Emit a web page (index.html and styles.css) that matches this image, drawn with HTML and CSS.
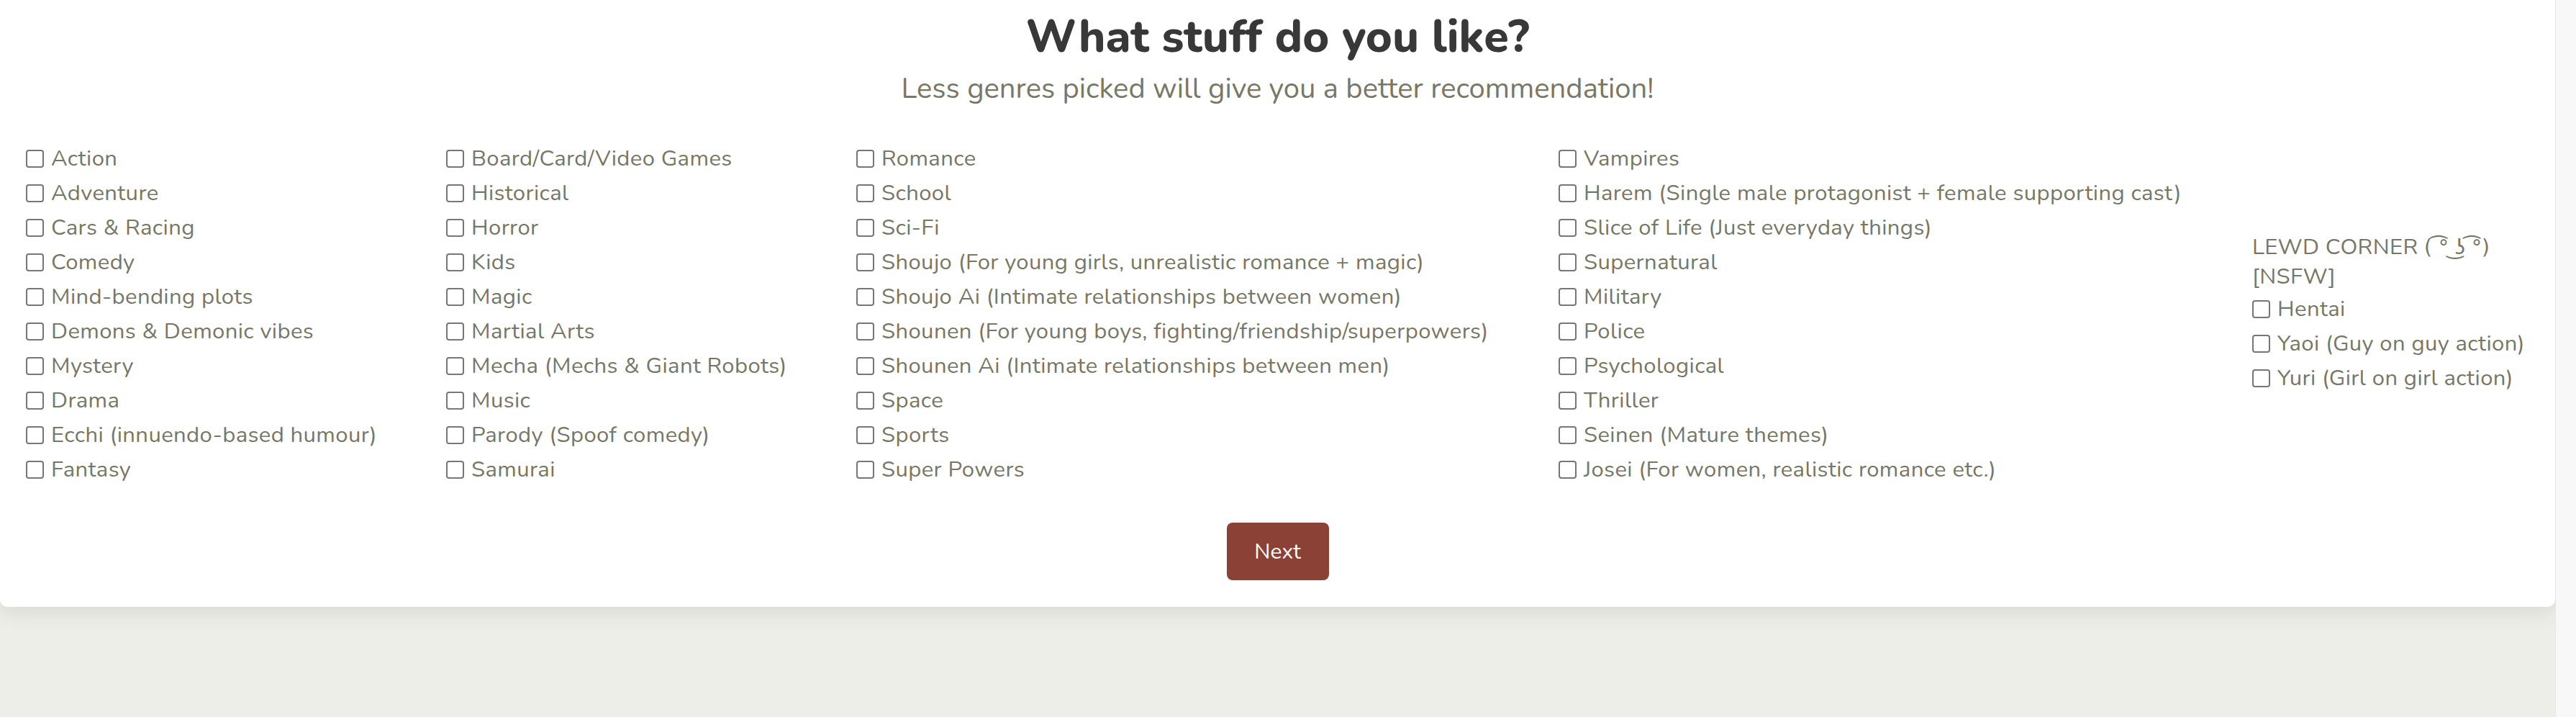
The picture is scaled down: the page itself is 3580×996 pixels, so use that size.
FILE: index.html
```html
<!DOCTYPE html>
<html lang="en">
<head>
<meta charset="utf-8">
<title>What stuff do you like?</title>
<link rel="stylesheet" href="styles.css">
</head>
<body>
<div class="page">
  <main class="card">
    <h1 class="title">What stuff do you like?</h1>
    <p class="subtitle">Less genres picked will give you a better recommendation!</p>
    <form class="genres">
      <div class="col">
        <label class="opt"><input type="checkbox"><span>Action</span></label>
        <label class="opt"><input type="checkbox"><span>Adventure</span></label>
        <label class="opt"><input type="checkbox"><span>Cars &amp; Racing</span></label>
        <label class="opt"><input type="checkbox"><span>Comedy</span></label>
        <label class="opt"><input type="checkbox"><span>Mind-bending plots</span></label>
        <label class="opt"><input type="checkbox"><span>Demons &amp; Demonic vibes</span></label>
        <label class="opt"><input type="checkbox"><span>Mystery</span></label>
        <label class="opt"><input type="checkbox"><span>Drama</span></label>
        <label class="opt"><input type="checkbox"><span>Ecchi (innuendo-based humour)</span></label>
        <label class="opt"><input type="checkbox"><span>Fantasy</span></label>
      </div>
      <div class="col">
        <label class="opt"><input type="checkbox"><span>Board/Card/Video Games</span></label>
        <label class="opt"><input type="checkbox"><span>Historical</span></label>
        <label class="opt"><input type="checkbox"><span>Horror</span></label>
        <label class="opt"><input type="checkbox"><span>Kids</span></label>
        <label class="opt"><input type="checkbox"><span>Magic</span></label>
        <label class="opt"><input type="checkbox"><span>Martial Arts</span></label>
        <label class="opt"><input type="checkbox"><span>Mecha (Mechs &amp; Giant Robots)</span></label>
        <label class="opt"><input type="checkbox"><span>Music</span></label>
        <label class="opt"><input type="checkbox"><span>Parody (Spoof comedy)</span></label>
        <label class="opt"><input type="checkbox"><span>Samurai</span></label>
      </div>
      <div class="col">
        <label class="opt"><input type="checkbox"><span>Romance</span></label>
        <label class="opt"><input type="checkbox"><span>School</span></label>
        <label class="opt"><input type="checkbox"><span>Sci-Fi</span></label>
        <label class="opt"><input type="checkbox"><span>Shoujo (For young girls, unrealistic romance + magic)</span></label>
        <label class="opt"><input type="checkbox"><span>Shoujo Ai (Intimate relationships between women)</span></label>
        <label class="opt"><input type="checkbox"><span>Shounen (For young boys, fighting/friendship/superpowers)</span></label>
        <label class="opt"><input type="checkbox"><span>Shounen Ai (Intimate relationships between men)</span></label>
        <label class="opt"><input type="checkbox"><span>Space</span></label>
        <label class="opt"><input type="checkbox"><span>Sports</span></label>
        <label class="opt"><input type="checkbox"><span>Super Powers</span></label>
      </div>
      <div class="col">
        <label class="opt"><input type="checkbox"><span>Vampires</span></label>
        <label class="opt"><input type="checkbox"><span>Harem (Single male protagonist + female supporting cast)</span></label>
        <label class="opt"><input type="checkbox"><span>Slice of Life (Just everyday things)</span></label>
        <label class="opt"><input type="checkbox"><span>Supernatural</span></label>
        <label class="opt"><input type="checkbox"><span>Military</span></label>
        <label class="opt"><input type="checkbox"><span>Police</span></label>
        <label class="opt"><input type="checkbox"><span>Psychological</span></label>
        <label class="opt"><input type="checkbox"><span>Thriller</span></label>
        <label class="opt"><input type="checkbox"><span>Seinen (Mature themes)</span></label>
        <label class="opt"><input type="checkbox"><span>Josei (For women, realistic romance etc.)</span></label>
      </div>
      <div class="col lewd">
        <div class="lewd-title">LEWD CORNER <span class="face">( ͡° ͜ʖ ͡°)</span><br>[NSFW]</div>
        <label class="opt"><input type="checkbox"><span>Hentai</span></label>
        <label class="opt"><input type="checkbox"><span>Yaoi (Guy on guy action)</span></label>
        <label class="opt"><input type="checkbox"><span>Yuri (Girl on girl action)</span></label>
      </div>
    </form>
    <div class="actions">
      <button type="button" class="next">Next</button>
    </div>
  </main>
</div>
<div class="scrollbar"></div>
</body>
</html>
```

FILE: styles.css
```css
html, body {
  margin: 0;
  padding: 0;
  height: 100%;
}

body {
  display: flex;
  background: #eeeee9;
  font-family: "Nunito", "Lato", "Noto Sans", sans-serif;
  overflow: hidden;
}

.page {
  flex: 1;
  min-width: 0;
}

.scrollbar {
  width: 28px;
  flex: none;
  background: #f8f8f8;
  border-left: 1px solid #e6e6e6;
}

.card {
  background: #ffffff;
  border-radius: 0 0 10px 10px;
  box-shadow: 0 6px 28px rgba(60, 60, 40, 0.13);
  padding: 15px 0 37px;
  text-align: center;
}

.title {
  margin: 0;
  font-size: 63px;
  line-height: 73px;
  font-weight: 800;
  color: #383838;
}

.subtitle {
  margin: 11px 0 0;
  font-size: 40px;
  line-height: 48px;
  color: #787866;
}

.genres {
  display: grid;
  grid-template-columns: 584px 570px 976px 964px 1fr;
  align-items: center;
  padding-left: 36px;
  margin: 49px 0 0;
  text-align: left;
}

.col {
  display: flex;
  flex-direction: column;
}

.opt {
  display: flex;
  align-items: center;
  gap: 10px;
  font-size: 31px;
  letter-spacing: 0.4px;
  line-height: 48px;
  color: #777765;
  white-space: nowrap;
}

.opt input {
  appearance: none;
  -webkit-appearance: none;
  margin: 0;
  width: 25px;
  height: 25px;
  flex: none;
  border: 2px solid #767676;
  border-radius: 4px;
  background: #ffffff;
}

.lewd-title {
  font-size: 31px;
  letter-spacing: 0.4px;
  line-height: 41px;
  color: #777765;
}

.face {
  font-family: "DejaVu Sans", "Noto Sans", sans-serif;
  font-size: 28px;
  letter-spacing: 0;
}

.actions {
  margin-top: 50px;
  display: flex;
  justify-content: center;
}

.next {
  width: 142px;
  height: 80px;
  border: 0;
  border-radius: 8px;
  background: #8b4135;
  color: #ffffff;
  font-family: inherit;
  font-size: 30px;
}
```
